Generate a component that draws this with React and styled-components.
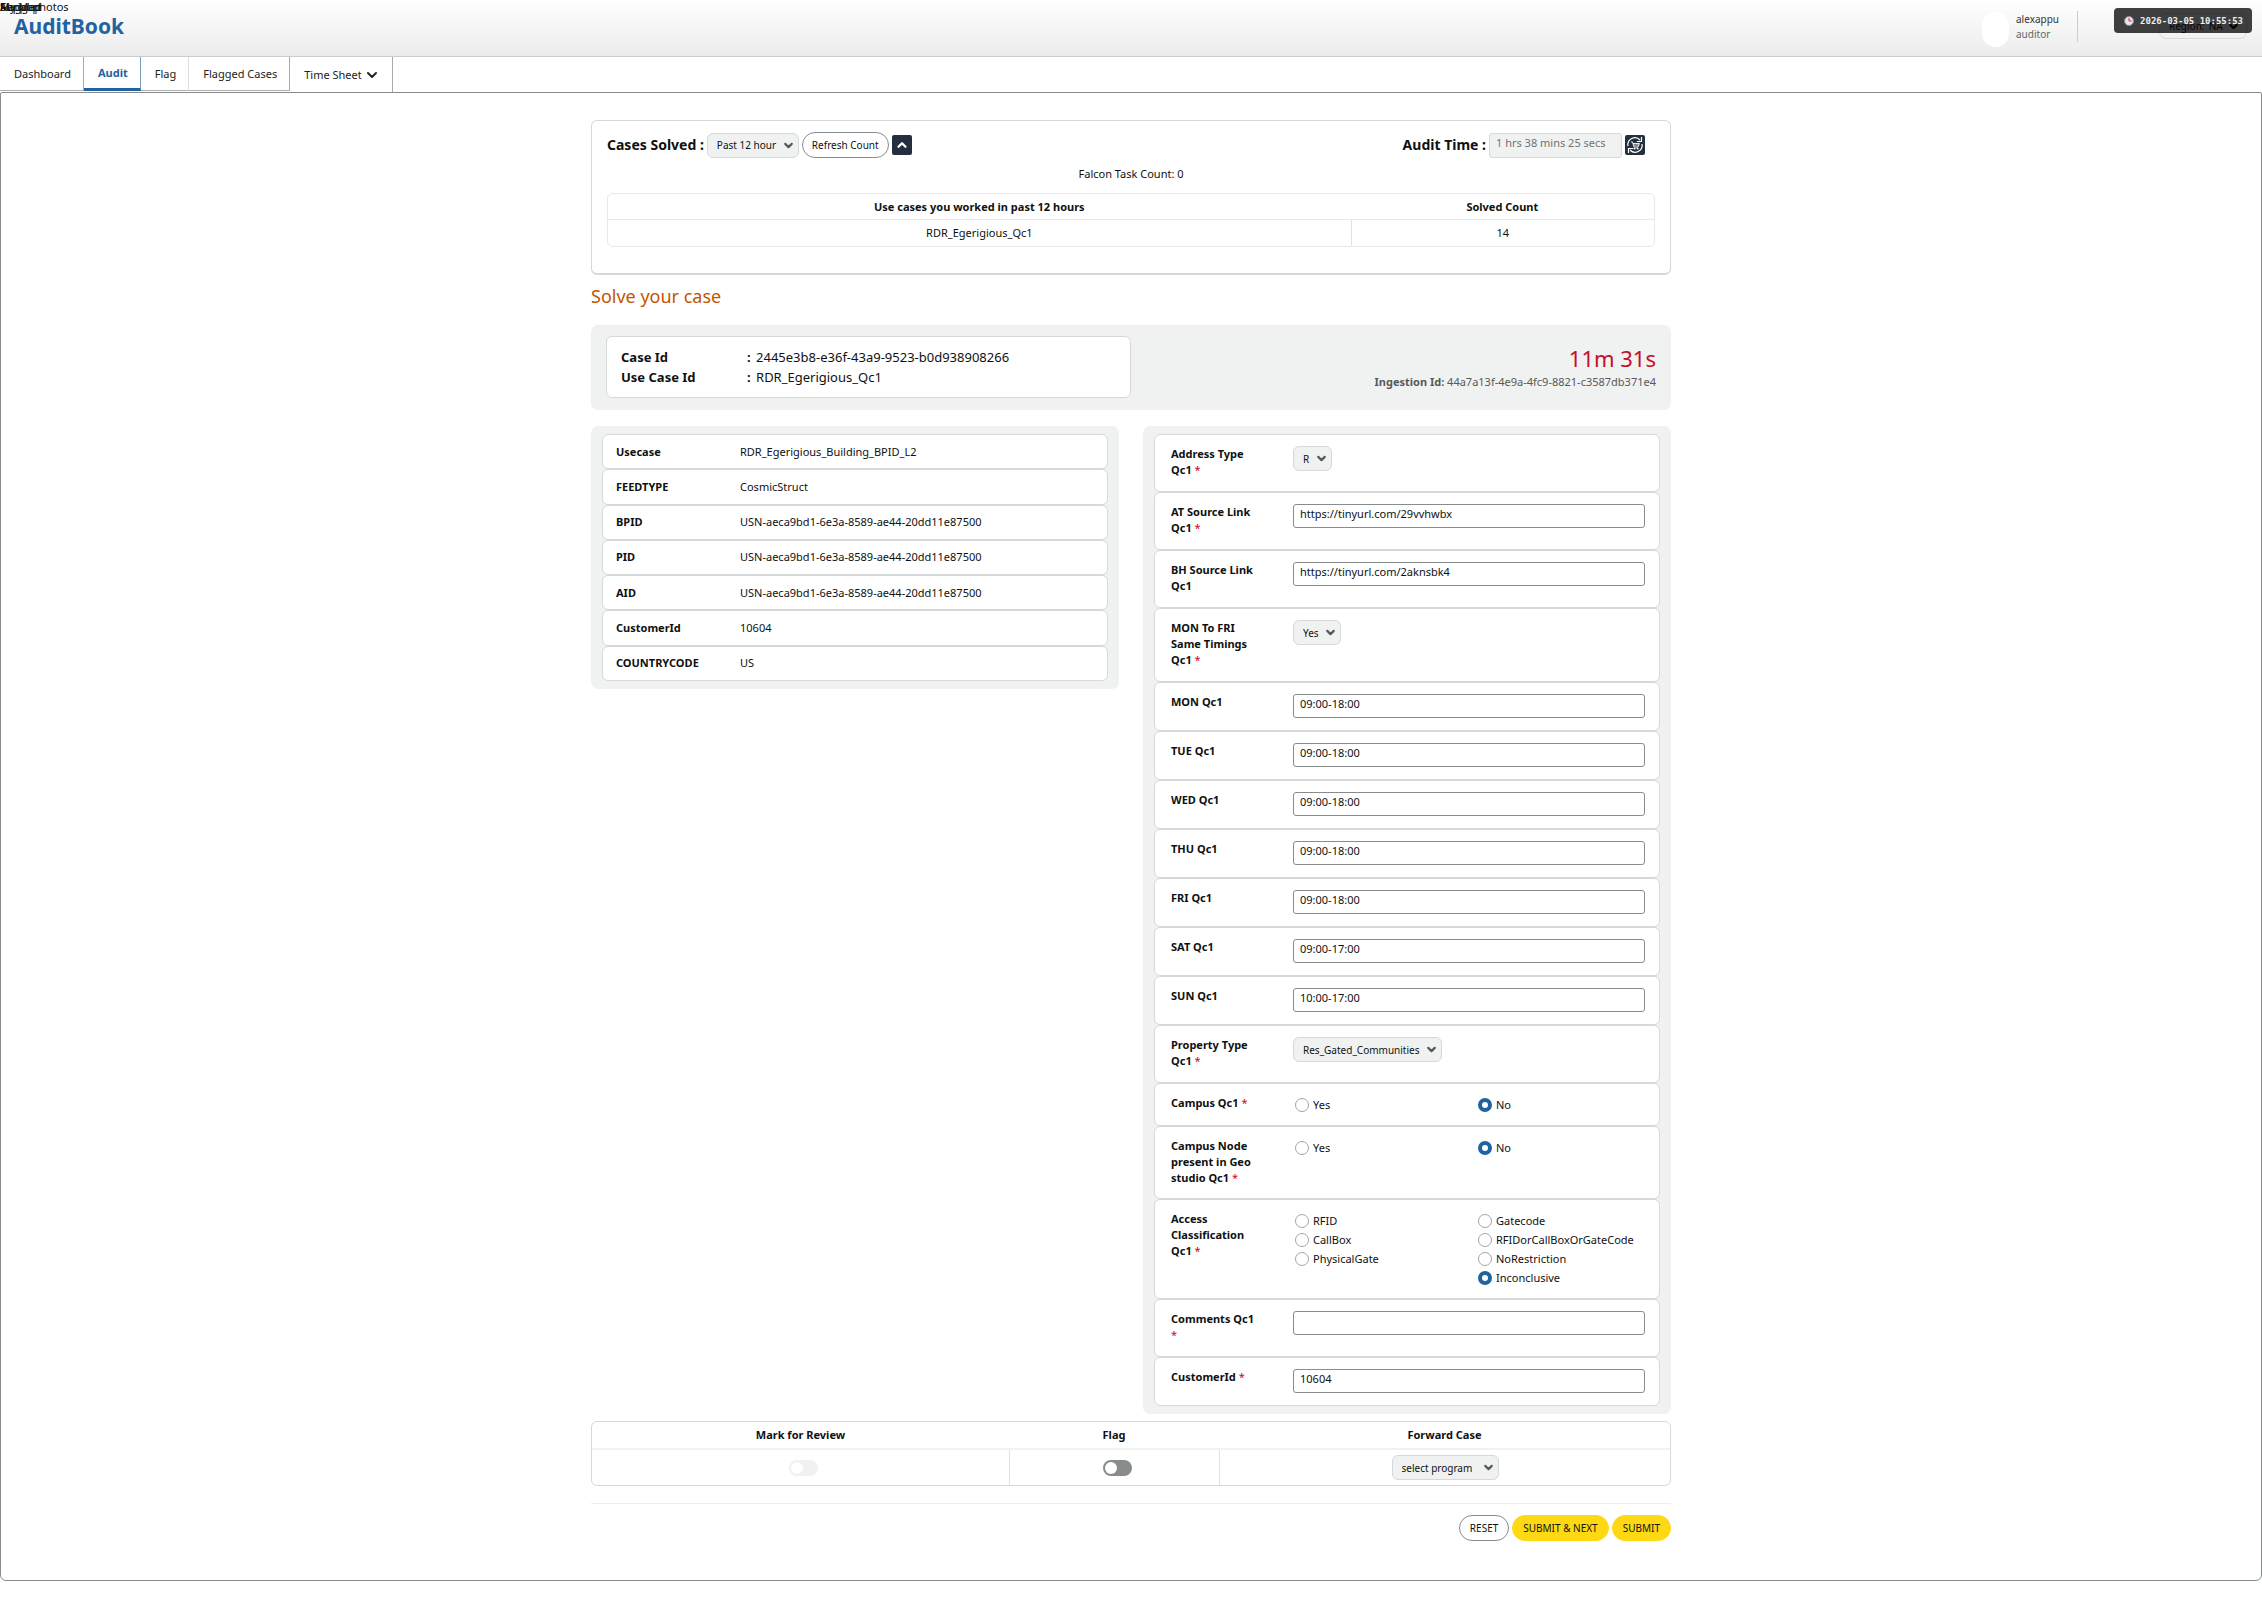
import React from "react";
import styled, { createGlobalStyle } from "styled-components";
import { ChevronDown, ChevronUp } from "lucide-react";

const GlobalStyle = createGlobalStyle`
  * {
    box-sizing: border-box;
  }
  body {
    margin: 0;
    background: #fff;
    color: #0f1111;
    font-family: "Noto Sans", "Open Sans", sans-serif;
    font-size: 11px;
    line-height: 16px;
  }
  button,
  input,
  select {
    font-family: inherit;
    color: inherit;
    margin: 0;
  }
`;

/* ---------- header ---------- */

const Header = styled.header`
  height: 57px;
  padding: 0 10px 0 14px;
  display: flex;
  align-items: flex-start;
  justify-content: space-between;
  background: linear-gradient(#fff, #ececec);
  border-bottom: 1px solid #ccc;
`;
const Hidden = styled.div`
  position: absolute;
  top: -1px;
  left: 0;
`;
const HiddenWord = styled.span`
  position: absolute;
  left: 0;
  white-space: nowrap;
`;
const Brand = styled.h1`
  margin: 12px 0 0;
  font-size: 21px;
  line-height: 28px;
  color: #2162a1;
`;
const HeaderRight = styled.div`
  display: flex;
  align-items: flex-start;
`;
const Avatar = styled.div`
  width: 27px;
  height: 35px;
  margin-top: 12px;
  border-radius: 14px;
  background: #fff;
`;
const User = styled.div`
  width: 61px;
  margin: 12px 0 0 7px;
  font-size: 10px;
  line-height: 15px;
  color: #333;
`;
const Role = styled.div`
  color: #666;
`;
const Split = styled.div`
  width: 1px;
  height: 31px;
  margin-top: 11px;
  background: #ccc;
`;
const Region = styled.button`
  width: 88px;
  height: 26px;
  margin: 13px 5px 0 81px;
  padding: 0 6px 0 9px;
  display: flex;
  align-items: center;
  justify-content: space-between;
  background: none;
  border: 1px solid #d5dbdb;
  border-radius: 7px;
  font-size: 10px;
`;
const Stamp = styled.div`
  position: absolute;
  top: 8px;
  right: 10px;
  height: 25px;
  padding: 0 9px 0 10px;
  display: flex;
  align-items: center;
  gap: 6px;
  border-radius: 4px;
  background: rgba(0, 0, 0, 0.75);
  color: #eee;
  font-family: "DejaVu Sans Mono", monospace;
  font-size: 9px;
  font-weight: bold;
`;

/* ---------- tabs ---------- */

const Tabs = styled.nav`
  height: 35px;
  display: flex;
  align-items: flex-start;
`;
const Tab = styled.a`
  height: ${(p) => (p.$menu ? 35 : 34)}px;
  padding: 0 12px 0 14px;
  display: flex;
  align-items: center;
  gap: 2px;
  color: ${(p) => (p.$active ? "#2162a1" : "#222")};
  font-weight: ${(p) => (p.$active ? "bold" : "normal")};
  text-decoration: none;
  border-right: 1px solid ${(p) => (p.$active ? "#7f9dbd" : p.$soft ? "#ddd" : "#aaa")};
  border-bottom: ${(p) => (p.$active ? "3px solid #2162a1" : p.$menu ? "none" : "1px solid #aab0b0")};
`;

/* ---------- page ---------- */

const Frame = styled.main`
  border: 1px solid #888c8c;
  border-radius: 2px 2px 6px 6px;
  padding: 27px 20px 39px;
  margin-bottom: 15px;
`;
const Column = styled.div`
  max-width: 1080px;
  margin: 0 auto;
`;
const Summary = styled.section`
  height: 155px;
  padding: 11px 15px;
  border: 1px solid #d5d9d9;
  border-bottom-width: 2px;
  border-radius: 6px;
`;
const Toolbar = styled.div`
  display: flex;
  justify-content: space-between;
  padding-right: 10px;
`;
const Tools = styled.div`
  display: flex;
  align-items: center;
  gap: 3px;
`;
const ToolLabel = styled.label`
  font-size: 14px;
  font-weight: bold;
`;
const Pill = styled.button`
  height: 26px;
  padding: 0 ${(p) => (p.$tight ? 9 : 10)}px;
  font-size: 10px;
  line-height: 16px;
  white-space: nowrap;
  border-radius: 13px;
  border: 1px solid ${(p) => (p.$primary ? "#ffd814" : "#888c8c")};
  background: ${(p) => (p.$primary ? "#ffd814" : "#fff")};
`;
const Square = styled.button`
  width: 20px;
  height: 20px;
  padding: 0;
  display: flex;
  align-items: center;
  justify-content: center;
  border: none;
  border-radius: 2px;
  background: #232f3e;
  color: #fff;
`;
const Falcon = styled.div`
  margin: 8px 0 11px;
  text-align: center;
`;

const Grid = styled.table`
  width: 100%;
  table-layout: fixed;
  border-collapse: separate;
  border-spacing: 0;
  border: 1px solid ${(p) => (p.$strong ? "#d5d9d9" : "#e7e9e9")};
  border-radius: 6px;
  text-align: center;

  th {
    height: ${(p) => (p.$strong ? 28 : 26)}px;
    padding: 0;
    border-bottom: ${(p) => (p.$strong ? "2px solid #f0f2f2" : "1px solid #e7e9e9")};
  }
  td {
    height: ${(p) => (p.$strong ? 35 : 26)}px;
    padding: 0;
    vertical-align: middle;
  }
  td + td {
    border-left: 1px solid #dfe2e2;
  }
`;
const SwitchBox = styled.div`
  padding-left: 6px;
`;

const Title = styled.h2`
  margin: 9px 0 17px;
  font-size: 18px;
  line-height: 24px;
  font-weight: normal;
  color: #c45500;
`;
const CaseBar = styled.section`
  min-height: 85px;
  padding: 11px 15px;
  display: flex;
  justify-content: space-between;
  align-items: flex-start;
  background: #f0f2f2;
  border-radius: 7px;
`;
const CaseBox = styled.dl`
  width: 525px;
  height: 62px;
  margin: 0;
  padding: 10px 14px;
  display: grid;
  grid-template-columns: 126px 1fr;
  grid-auto-rows: 20px;
  align-items: center;
  background: #fff;
  border: 1px solid #d5d9d9;
  border-radius: 6px;

  dt {
    font-size: 13px;
    font-weight: bold;
  }
  dd {
    margin: 0;
    font-size: 13px;
  }
  dd::before {
    content: ": ";
    margin-right: 2px;
    font-weight: bold;
  }
`;
const Timing = styled.div`
  text-align: right;
  color: #565959;
`;
const Timer = styled.div`
  margin: 8px 0 2px;
  font-size: 22px;
  line-height: 28px;
  color: #c40f27;
`;

const Columns = styled.div`
  display: grid;
  grid-template-columns: 1fr 1fr;
  gap: 24px;
  align-items: start;
  margin: 16px 0 7px;
`;
const Panel = styled.section`
  padding: 8px 11px;
  background: #f0f2f2;
  border-radius: 7px;
`;
const Facts = styled.dl`
  min-height: 247px;
  margin: 0;
  display: grid;
  grid-auto-rows: 1fr;
`;
const Fact = styled.div`
  padding: 0 13px;
  display: grid;
  grid-template-columns: 124px 1fr;
  align-items: center;
  background: #fff;
  border: 1px solid #d5d9d9;
  border-radius: 6px;

  dt {
    font-weight: bold;
  }
  dd {
    margin: 0;
  }
`;

const Field = styled.div`
  padding: 11px 14px ${(p) => (p.$short ? 11 : 12)}px 16px;
  display: grid;
  grid-template-columns: 122px 1fr;
  align-items: start;
  background: #fff;
  border: 1px solid #d5d9d9;
  border-radius: 6px;
`;
const FieldLabel = styled.div`
  width: 88px;
  padding-bottom: 1px;
  font-weight: bold;
`;
const Star = styled.span`
  color: #d0021b;
  font-weight: normal;
`;
const TextInput = styled.input`
  width: ${(p) => p.$width || "100%"};
  height: ${(p) => (p.readOnly ? 25 : 24)}px;
  padding: 0 6px 5px 6px;
  font-size: 11px;
  border: 1px solid #888c8c;
  border-radius: 3px;
  background: #fff;
  outline: none;

  &:read-only {
    border-color: #d5d9d9;
    background: #f0f2f2;
    color: #6f7373;
  }
`;
const SelectWrap = styled.span`
  display: inline-block;
  position: relative;
  vertical-align: middle;

  svg {
    position: absolute;
    top: 6px;
    right: 4px;
    color: #565959;
    pointer-events: none;
  }
`;
const SelectInput = styled.select`
  width: ${(p) => p.$width || "auto"};
  height: 25px;
  padding: 0 21px 0 9px;
  display: block;
  appearance: none;
  font-size: 10px;
  border: 1px solid #d5d9d9;
  border-radius: 6px;
  background: #f0f2f2;
`;
const Radios = styled.div`
  display: grid;
  grid-template-columns: 183px 1fr;
  align-items: start;
`;
const Choice = styled.label`
  height: 19px;
  padding-left: 2px;
  display: flex;
  align-items: center;
  gap: 4px;
`;
const Radio = styled.input`
  appearance: none;
  width: 14px;
  height: 14px;
  border: 1px solid #a2a6a6;
  border-radius: 50%;
  background: #fff;

  &:checked {
    border: 4px solid #2162a1;
  }
`;
const Toggle = styled.input`
  appearance: none;
  width: 29px;
  height: 16px;
  padding: 2px;
  display: block;
  margin: 0 auto;
  border-radius: 8px;
  background: #888c8c;

  &::before {
    content: "";
    display: block;
    width: 12px;
    height: 12px;
    border-radius: 50%;
    background: #fff;
  }
  &:disabled {
    background: #f0f2f2;
  }
`;
const Actions = styled.div`
  margin-top: 17px;
  padding-top: 11px;
  display: flex;
  justify-content: flex-end;
  gap: 3px;
  border-top: 1px solid #eceeee;
`;

const facts = [
  ["Usecase", "RDR_Egerigious_Building_BPID_L2"],
  ["FEEDTYPE", "CosmicStruct"],
  ["BPID", "USN-aeca9bd1-6e3a-8589-ae44-20dd11e87500"],
  ["PID", "USN-aeca9bd1-6e3a-8589-ae44-20dd11e87500"],
  ["AID", "USN-aeca9bd1-6e3a-8589-ae44-20dd11e87500"],
  ["CustomerId", "10604"],
  ["COUNTRYCODE", "US"],
];

const fields = [
  { label: "Address Type Qc1", required: true, select: "R" },
  { label: "AT Source Link Qc1", required: true, text: "https://tinyurl.com/29vvhwbx" },
  { label: "BH Source Link Qc1", text: "https://tinyurl.com/2aknsbk4" },
  { label: "MON To FRI Same Timings Qc1", required: true, select: "Yes" },
  { label: "MON Qc1", text: "09:00-18:00" },
  { label: "TUE Qc1", text: "09:00-18:00" },
  { label: "WED Qc1", text: "09:00-18:00" },
  { label: "THU Qc1", text: "09:00-18:00" },
  { label: "FRI Qc1", text: "09:00-18:00" },
  { label: "SAT Qc1", text: "09:00-17:00" },
  { label: "SUN Qc1", text: "10:00-17:00" },
  { label: "Property Type Qc1", required: true, select: "Res_Gated_Communities" },
  { label: "Campus Qc1", required: true, radios: [["Yes"], ["No"]], picked: "No" },
  {
    label: "Campus Node present in Geo studio Qc1",
    required: true,
    radios: [["Yes"], ["No"]],
    picked: "No",
  },
  {
    label: "Access Classification Qc1",
    required: true,
    radios: [
      ["RFID", "CallBox", "PhysicalGate"],
      ["Gatecode", "RFIDorCallBoxOrGateCode", "NoRestriction", "Inconclusive"],
    ],
    picked: "Inconclusive",
  },
  { label: "Comments Qc1", required: true, text: "" },
  { label: "CustomerId", required: true, text: "10604" },
];

// menu entries that collapse onto each other in the corner
const hiddenWords = ["Aerial photos", "My Map", "Flagged", "Support"];

const Select = ({ id, value, width, label }) => (
  <SelectWrap>
    <SelectInput id={id} $width={width} aria-label={label}>
      <option>{value}</option>
    </SelectInput>
    <ChevronDown size={13} strokeWidth={4} />
  </SelectWrap>
);

const FormField = ({ field, id }) => {
  const label = (
    <>
      {field.label} {field.required && <Star>*</Star>}
    </>
  );
  if (field.radios) {
    return (
      <Field $short role="radiogroup" aria-labelledby={id + "-label"}>
        <FieldLabel id={id + "-label"}>{label}</FieldLabel>
        <Radios>
          {field.radios.map((column, i) => (
            <div key={i}>
              {column.map((option) => (
                <Choice key={option}>
                  <Radio type="radio" name={id} defaultChecked={option === field.picked} />
                  {option}
                </Choice>
              ))}
            </div>
          ))}
        </Radios>
      </Field>
    );
  }
  return (
    <Field>
      <FieldLabel as="label" htmlFor={id}>
        {label}
      </FieldLabel>
      {field.select ? (
        <div>
          <Select id={id} value={field.select} />
        </div>
      ) : (
        <TextInput id={id} type="text" defaultValue={field.text} />
      )}
    </Field>
  );
};

const ClockIcon = () => (
  <svg width="10" height="10" viewBox="0 0 20 20">
    <circle cx="10" cy="10" r="9" fill="#e8e4ee" stroke="#8d8794" strokeWidth="2" />
    <path d="M10 4v6h5" fill="none" stroke="#c2334d" strokeWidth="2" />
  </svg>
);

const CartRefreshIcon = () => (
  <svg width="18" height="18" viewBox="0 0 36 36" fill="none" stroke="#fff" strokeWidth="2.4">
    <path d="M4 20A14 14 0 0 1 28 8" />
    <path d="M32 16A14 14 0 0 1 8 28" />
    <path d="M31 2v9h-9" />
    <path d="M5 34v-9h9" />
    <path d="M10 12h3l3 10h8l3-7H14M15 18h11" strokeWidth="1.8" />
    <circle cx="17" cy="25" r="1" />
    <circle cx="23" cy="25" r="1" />
  </svg>
);

const App = () => {
  return (
    <>
      <GlobalStyle />
      <Header>
        <Brand>AuditBook</Brand>
        <HeaderRight>
          <Avatar />
          <User>
            alexappu
            <Role>auditor</Role>
          </User>
          <Split />
          <Region>
            <span>Region:</span>
            <span>NA</span>
            <ChevronDown size={13} strokeWidth={4} />
          </Region>
        </HeaderRight>
      </Header>
      <Hidden>
        {hiddenWords.map((word) => (
          <HiddenWord key={word}>{word}</HiddenWord>
        ))}
      </Hidden>
      <Stamp>
        <ClockIcon />
        2026-03-05 10:55:53
      </Stamp>
      <Tabs>
        <Tab href="#dashboard">Dashboard</Tab>
        <Tab href="#audit" $active>
          Audit
        </Tab>
        <Tab href="#flag" $soft>
          Flag
        </Tab>
        <Tab href="#flagged">Flagged Cases</Tab>
        <Tab href="#timesheet" $menu>
          Time Sheet
          <ChevronDown size={16} strokeWidth={3} />
        </Tab>
      </Tabs>
      <Frame>
        <Column>
          <Summary>
            <Toolbar>
              <Tools>
                <ToolLabel htmlFor="window">Cases Solved :</ToolLabel>
                <Select id="window" value="Past 12 hour" />
                <Pill $tight>Refresh Count</Pill>
                <Square aria-label="Collapse">
                  <ChevronUp size={14} strokeWidth={4} />
                </Square>
              </Tools>
              <Tools>
                <ToolLabel htmlFor="audit-time">Audit Time :</ToolLabel>
                <TextInput
                  id="audit-time"
                  type="text"
                  readOnly
                  $width="133px"
                  defaultValue="1 hrs 38 mins 25 secs"
                />
                <Square aria-label="Refresh audit time">
                  <CartRefreshIcon />
                </Square>
              </Tools>
            </Toolbar>
            <Falcon>Falcon Task Count: 0</Falcon>
            <Grid>
              <colgroup>
                <col width="71%" />
                <col width="29%" />
              </colgroup>
              <thead>
                <tr>
                  <th>Use cases you worked in past 12 hours</th>
                  <th>Solved Count</th>
                </tr>
              </thead>
              <tbody>
                <tr>
                  <td>RDR_Egerigious_Qc1</td>
                  <td>14</td>
                </tr>
              </tbody>
            </Grid>
          </Summary>

          <Title>Solve your case</Title>
          <CaseBar>
            <CaseBox>
              <dt>Case Id</dt>
              <dd>2445e3b8-e36f-43a9-9523-b0d938908266</dd>
              <dt>Use Case Id</dt>
              <dd>RDR_Egerigious_Qc1</dd>
            </CaseBox>
            <Timing>
              <Timer>11m 31s</Timer>
              <b>Ingestion Id:</b> 44a7a13f-4e9a-4fc9-8821-c3587db371e4
            </Timing>
          </CaseBar>

          <Columns>
            <Panel>
              <Facts>
                {facts.map(([name, value]) => (
                  <Fact key={name}>
                    <dt>{name}</dt>
                    <dd>{value}</dd>
                  </Fact>
                ))}
              </Facts>
            </Panel>
            <Panel>
              {fields.map((field, i) => (
                <FormField key={field.label} field={field} id={"field-" + i} />
              ))}
            </Panel>
          </Columns>

          <Grid $strong>
            <colgroup>
              <col width="417" />
              <col width="210" />
              <col />
            </colgroup>
            <thead>
              <tr>
                <th>Mark for Review</th>
                <th>Flag</th>
                <th>Forward Case</th>
              </tr>
            </thead>
            <tbody>
              <tr>
                <td>
                  <SwitchBox>
                    <Toggle type="checkbox" role="switch" disabled aria-label="Mark for Review" />
                  </SwitchBox>
                </td>
                <td>
                  <SwitchBox>
                    <Toggle type="checkbox" role="switch" aria-label="Flag" />
                  </SwitchBox>
                </td>
                <td>
                  <Select value="select program" width="107px" label="Forward Case" />
                </td>
              </tr>
            </tbody>
          </Grid>
          <Actions>
            <Pill>RESET</Pill>
            <Pill $primary>SUBMIT &amp; NEXT</Pill>
            <Pill $primary>SUBMIT</Pill>
          </Actions>
        </Column>
      </Frame>
    </>
  );
};

export default App;
